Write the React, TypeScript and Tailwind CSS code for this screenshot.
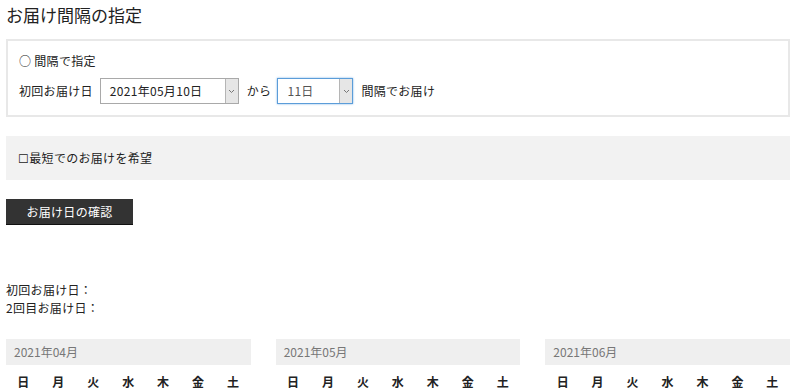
import React from 'react';

const days = ['日', '月', '火', '水', '木', '金', '土'];
const months = ['2021年04月', '2021年05月', '2021年06月'];

function Select({ value, width, focused }: { value: string; width: string; focused?: boolean }) {
  return (
    <div
      className={`flex h-[26px] ${width} border ${focused ? 'border-[#5b9dd9] shadow-[0_0_2px_#7fb3e6]' : 'border-[#a9a9a9]'} bg-white`}
    >
      <div className={`flex-1 flex items-center pl-[9px] ${focused ? 'text-[#555]' : 'text-[#222]'}`}>{value}</div>
      <div className="w-[13px] border-l border-[#b5b5b5] bg-[#e6e6e6] flex items-center justify-center">
        <svg width="7" height="5" viewBox="0 0 7 5">
          <path d="M1 1l2.5 2.5L6 1" fill="none" stroke="#777" strokeWidth="1" />
        </svg>
      </div>
    </div>
  );
}

export default function App() {
  return (
    <div className="w-[800px] h-[392px] overflow-hidden bg-white text-[12px] tracking-[0.3px] text-[#222] px-[6px]" style={{ fontFamily: '"Noto Sans CJK JP", "Noto Sans", sans-serif' }}>
      <div className="w-[784px]">
        <h1 className="text-[17px] leading-[20px] pt-[5px] h-[39px] text-[#222] tracking-normal">お届け間隔の指定</h1>

        <div className="border-2 border-[#e8e8e8] h-[78px] px-[11px] pt-[11px]">
          <div className="leading-[18px]">○ 間隔で指定</div>
          <div className="flex items-center mt-[8px] h-[26px]">
            <span className="mr-[7px]">初回お届け日</span>
            <Select value="2021年05月10日" width="w-[139px]" />
            <span className="ml-[8px] mr-[6px]">から</span>
            <Select value="11日" width="w-[76px]" focused />
            <span className="ml-[8px]">間隔でお届け</span>
          </div>
        </div>

        <div className="mt-[19px] bg-[#f2f2f2] h-[44px] flex items-center px-[12px]">☐最短でのお届けを希望</div>

        <button className="mt-[19px] h-[26px] w-[127px] bg-[#333] text-white text-[12px] tracking-[0.3px] flex items-center justify-center border-b border-[#111]">
          お届け日の確認
        </button>

        <div className="mt-[56px] leading-[18px]">
          <div>初回お届け日：</div>
          <div>2回目お届け日：</div>
        </div>

        <div className="grid grid-cols-3 gap-x-[25px] mt-[22px]">
          {months.map((m) => (
            <div key={m}>
              <div className="h-[26px] bg-[#efefef] flex items-center px-[8px] text-[#777] tracking-normal">{m}</div>
              <div className="grid grid-cols-7 mt-[8px] leading-[18px]">
                {days.map((d) => (
                  <div key={d} className="text-center font-bold">{d}</div>
                ))}
              </div>
            </div>
          ))}
        </div>
      </div>
    </div>
  );
}
